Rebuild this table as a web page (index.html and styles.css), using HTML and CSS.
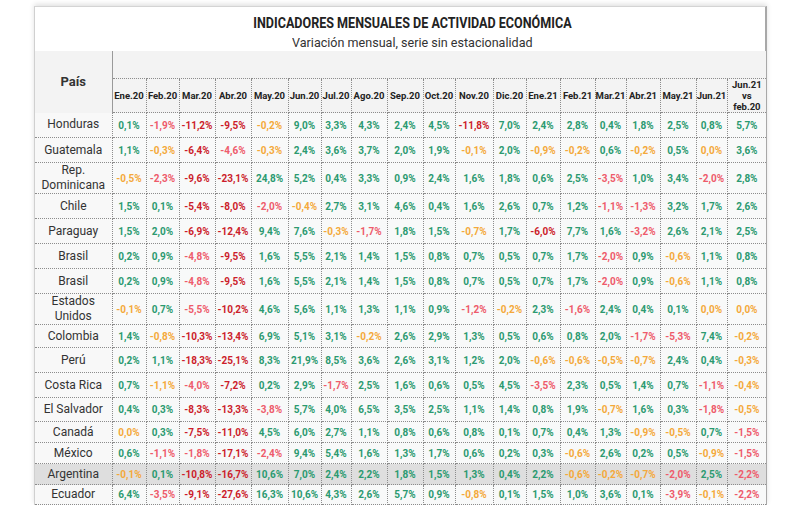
FILE: index.html
```html
<!DOCTYPE html>
<html lang="es">
<head>
<meta charset="utf-8">
<title>Indicadores mensuales de actividad económica</title>
<link rel="stylesheet" href="styles.css">
</head>
<body>
<div class="card">
  <div class="heading">
    <div class="title"><span>INDICADORES MENSUALES DE ACTIVIDAD ECONÓMICA</span></div>
    <div class="subtitle"><span>Variación mensual, serie sin estacionalidad</span></div>
  </div>
  <table class="grid">
    <colgroup>
      <col class="c-pais">
      <col style="width:34px"><col style="width:33px"><col style="width:36px"><col style="width:36px"><col style="width:37px"><col style="width:33px"><col style="width:30px"><col style="width:36px"><col style="width:36px"><col style="width:32px"><col style="width:38px"><col style="width:33px"><col style="width:34px"><col style="width:35px"><col style="width:31px"><col style="width:34px"><col style="width:36px"><col style="width:31px"><col style="width:39px">
    </colgroup>
    <thead>
      <tr class="h-top">
        <th class="pais" rowspan="2">País</th>
        <th class="blank" colspan="19"></th>
      </tr>
      <tr class="h-months">
        <th>Ene.20</th><th>Feb.20</th><th>Mar.20</th><th>Abr.20</th><th>May.20</th><th>Jun.20</th><th>Jul.20</th><th>Ago.20</th><th>Sep.20</th><th>Oct.20</th><th>Nov.20</th><th>Dic.20</th><th>Ene.21</th><th>Feb.21</th><th>Mar.21</th><th>Abr.21</th><th>May.21</th><th>Jun.21</th><th class="vs">Jun.21<br>vs<br>feb.20</th>
      </tr>
    </thead>
    <tbody>
      <tr>
        <th>Honduras</th>
        <td class="g">0,1%</td><td class="p">-1,9%</td><td class="r">-11,2%</td><td class="r">-9,5%</td><td class="o">-0,2%</td><td class="g">9,0%</td><td class="g">3,3%</td><td class="g">4,3%</td><td class="g">2,4%</td><td class="g">4,5%</td><td class="r">-11,8%</td><td class="g">7,0%</td><td class="g">2,4%</td><td class="g">2,8%</td><td class="g">0,4%</td><td class="g">1,8%</td><td class="g">2,5%</td><td class="g">0,8%</td><td class="g">5,7%</td>
      </tr>
      <tr>
        <th>Guatemala</th>
        <td class="g">1,1%</td><td class="o">-0,3%</td><td class="r">-6,4%</td><td class="p">-4,6%</td><td class="o">-0,3%</td><td class="g">2,4%</td><td class="g">3,6%</td><td class="g">3,7%</td><td class="g">2,0%</td><td class="g">1,9%</td><td class="o">-0,1%</td><td class="g">2,0%</td><td class="o">-0,9%</td><td class="o">-0,2%</td><td class="g">0,6%</td><td class="o">-0,2%</td><td class="g">0,5%</td><td class="o">0,0%</td><td class="g">3,6%</td>
      </tr>
      <tr class="tall">
        <th>Rep.<br>Dominicana</th>
        <td class="o">-0,5%</td><td class="p">-2,3%</td><td class="r">-9,6%</td><td class="r">-23,1%</td><td class="g">24,8%</td><td class="g">5,2%</td><td class="g">0,4%</td><td class="g">3,3%</td><td class="g">0,9%</td><td class="g">2,4%</td><td class="g">1,6%</td><td class="g">1,8%</td><td class="g">0,6%</td><td class="g">2,5%</td><td class="p">-3,5%</td><td class="g">1,0%</td><td class="g">3,4%</td><td class="p">-2,0%</td><td class="g">2,8%</td>
      </tr>
      <tr>
        <th>Chile</th>
        <td class="g">1,5%</td><td class="g">0,1%</td><td class="r">-5,4%</td><td class="r">-8,0%</td><td class="p">-2,0%</td><td class="o">-0,4%</td><td class="g">2,7%</td><td class="g">3,1%</td><td class="g">4,6%</td><td class="g">0,4%</td><td class="g">1,6%</td><td class="g">2,6%</td><td class="g">0,7%</td><td class="g">1,2%</td><td class="p">-1,1%</td><td class="p">-1,3%</td><td class="g">3,2%</td><td class="g">1,7%</td><td class="g">2,6%</td>
      </tr>
      <tr>
        <th>Paraguay</th>
        <td class="g">1,5%</td><td class="g">2,0%</td><td class="r">-6,9%</td><td class="r">-12,4%</td><td class="g">9,4%</td><td class="g">7,6%</td><td class="o">-0,3%</td><td class="p">-1,7%</td><td class="g">1,8%</td><td class="g">1,5%</td><td class="o">-0,7%</td><td class="g">1,7%</td><td class="r">-6,0%</td><td class="g">7,7%</td><td class="g">1,6%</td><td class="p">-3,2%</td><td class="g">2,6%</td><td class="g">2,1%</td><td class="g">2,5%</td>
      </tr>
      <tr>
        <th>Brasil</th>
        <td class="g">0,2%</td><td class="g">0,9%</td><td class="p">-4,8%</td><td class="r">-9,5%</td><td class="g">1,6%</td><td class="g">5,5%</td><td class="g">2,1%</td><td class="g">1,4%</td><td class="g">1,5%</td><td class="g">0,8%</td><td class="g">0,7%</td><td class="g">0,5%</td><td class="g">0,7%</td><td class="g">1,7%</td><td class="p">-2,0%</td><td class="g">0,9%</td><td class="o">-0,6%</td><td class="g">1,1%</td><td class="g">0,8%</td>
      </tr>
      <tr>
        <th>Brasil</th>
        <td class="g">0,2%</td><td class="g">0,9%</td><td class="p">-4,8%</td><td class="r">-9,5%</td><td class="g">1,6%</td><td class="g">5,5%</td><td class="g">2,1%</td><td class="g">1,4%</td><td class="g">1,5%</td><td class="g">0,8%</td><td class="g">0,7%</td><td class="g">0,5%</td><td class="g">0,7%</td><td class="g">1,7%</td><td class="p">-2,0%</td><td class="g">0,9%</td><td class="o">-0,6%</td><td class="g">1,1%</td><td class="g">0,8%</td>
      </tr>
      <tr class="tall">
        <th>Estados<br>Unidos</th>
        <td class="o">-0,1%</td><td class="g">0,7%</td><td class="p">-5,5%</td><td class="r">-10,2%</td><td class="g">4,6%</td><td class="g">5,6%</td><td class="g">1,1%</td><td class="g">1,3%</td><td class="g">1,1%</td><td class="g">0,9%</td><td class="p">-1,2%</td><td class="o">-0,2%</td><td class="g">2,3%</td><td class="p">-1,6%</td><td class="g">2,4%</td><td class="g">0,4%</td><td class="g">0,1%</td><td class="o">0,0%</td><td class="o">0,0%</td>
      </tr>
      <tr class="r23">
        <th>Colombia</th>
        <td class="g">1,4%</td><td class="o">-0,8%</td><td class="r">-10,3%</td><td class="r">-13,4%</td><td class="g">6,9%</td><td class="g">5,1%</td><td class="g">3,1%</td><td class="o">-0,2%</td><td class="g">2,6%</td><td class="g">2,9%</td><td class="g">1,3%</td><td class="g">0,5%</td><td class="g">0,6%</td><td class="g">0,8%</td><td class="g">2,0%</td><td class="p">-1,7%</td><td class="p">-5,3%</td><td class="g">7,4%</td><td class="o">-0,2%</td>
      </tr>
      <tr>
        <th>Perú</th>
        <td class="g">0,2%</td><td class="g">1,1%</td><td class="r">-18,3%</td><td class="r">-25,1%</td><td class="g">8,3%</td><td class="g">21,9%</td><td class="g">8,5%</td><td class="g">3,6%</td><td class="g">2,6%</td><td class="g">3,1%</td><td class="g">1,2%</td><td class="g">2,0%</td><td class="o">-0,6%</td><td class="o">-0,6%</td><td class="o">-0,5%</td><td class="o">-0,7%</td><td class="g">2,4%</td><td class="g">0,4%</td><td class="o">-0,3%</td>
      </tr>
      <tr>
        <th>Costa Rica</th>
        <td class="g">0,7%</td><td class="o">-1,1%</td><td class="p">-4,0%</td><td class="r">-7,2%</td><td class="g">0,2%</td><td class="g">2,9%</td><td class="p">-1,7%</td><td class="g">2,5%</td><td class="g">1,6%</td><td class="g">0,6%</td><td class="g">0,5%</td><td class="g">4,5%</td><td class="p">-3,5%</td><td class="g">2,3%</td><td class="g">0,5%</td><td class="g">1,4%</td><td class="g">0,7%</td><td class="p">-1,1%</td><td class="o">-0,4%</td>
      </tr>
      <tr class="r24">
        <th>El Salvador</th>
        <td class="g">0,4%</td><td class="g">0,3%</td><td class="r">-8,3%</td><td class="r">-13,3%</td><td class="p">-3,8%</td><td class="g">5,7%</td><td class="g">4,0%</td><td class="g">6,5%</td><td class="g">3,5%</td><td class="g">2,5%</td><td class="g">1,1%</td><td class="g">1,4%</td><td class="g">0,8%</td><td class="g">1,9%</td><td class="o">-0,7%</td><td class="g">1,6%</td><td class="g">0,3%</td><td class="p">-1,8%</td><td class="o">-0,5%</td>
      </tr>
      <tr class="r22">
        <th>Canadá</th>
        <td class="o">0,0%</td><td class="g">0,3%</td><td class="r">-7,5%</td><td class="r">-11,0%</td><td class="g">4,5%</td><td class="g">6,0%</td><td class="g">2,7%</td><td class="g">1,1%</td><td class="g">0,8%</td><td class="g">0,6%</td><td class="g">0,8%</td><td class="g">0,1%</td><td class="g">0,7%</td><td class="g">0,4%</td><td class="g">1,3%</td><td class="o">-0,9%</td><td class="o">-0,5%</td><td class="g">0,7%</td><td class="p">-1,5%</td>
      </tr>
      <tr class="r21">
        <th>México</th>
        <td class="g">0,6%</td><td class="p">-1,1%</td><td class="p">-1,8%</td><td class="r">-17,1%</td><td class="p">-2,4%</td><td class="g">9,4%</td><td class="g">5,4%</td><td class="g">1,6%</td><td class="g">1,3%</td><td class="g">1,7%</td><td class="g">0,6%</td><td class="g">0,2%</td><td class="g">0,3%</td><td class="o">-0,6%</td><td class="g">2,6%</td><td class="g">0,2%</td><td class="g">0,5%</td><td class="o">-0,9%</td><td class="p">-1,5%</td>
      </tr>
      <tr class="r21 hl">
        <th>Argentina</th>
        <td class="o">-0,1%</td><td class="g">0,1%</td><td class="r">-10,8%</td><td class="r">-16,7%</td><td class="g">10,6%</td><td class="g">7,0%</td><td class="g">2,4%</td><td class="g">2,2%</td><td class="g">1,8%</td><td class="g">1,5%</td><td class="g">1,3%</td><td class="g">0,4%</td><td class="g">2,2%</td><td class="o">-0,6%</td><td class="o">-0,2%</td><td class="o">-0,7%</td><td class="p">-2,0%</td><td class="g">2,5%</td><td class="p">-2,2%</td>
      </tr>
      <tr class="r20">
        <th>Ecuador</th>
        <td class="g">6,4%</td><td class="p">-3,5%</td><td class="r">-9,1%</td><td class="r">-27,6%</td><td class="g">16,3%</td><td class="g">10,6%</td><td class="g">4,3%</td><td class="g">2,6%</td><td class="g">5,7%</td><td class="g">0,9%</td><td class="o">-0,8%</td><td class="g">0,1%</td><td class="g">1,5%</td><td class="g">1,0%</td><td class="g">3,6%</td><td class="g">0,1%</td><td class="p">-3,9%</td><td class="o">-0,1%</td><td class="p">-2,2%</td>
      </tr>
    </tbody>
  </table>
</div>
</body>
</html>
```

FILE: styles.css
```css
html, body {
  margin: 0;
  padding: 0;
  background: #ffffff;
}

body {
  font-family: Roboto, "Liberation Sans", Arial, sans-serif;
  color: #333333;
}

.card {
  margin: 6px 0 0 34px;
  width: 733px;
  background: #ffffff;
  border-top: 1px solid #d4d4d4;
  border-left: 1px solid #d0d0d0;
  border-right: 2px solid #a8a8a8;
  box-shadow: 0 -2px 5px rgba(0, 0, 0, 0.12);
  box-sizing: border-box;
}

.heading {
  padding: 7px 0 0 24px;
  text-align: center;
  height: 44px;
  box-sizing: border-box;
}

.title {
  line-height: 18px;
  height: 18px;
  font-size: 15.5px;
  font-weight: 700;
  color: #222222;
}

.title span,
.subtitle span {
  display: inline-block;
  white-space: nowrap;
}

.title span {
  transform: scaleX(0.81);
}

.subtitle {
  margin-top: 2px;
  line-height: 17px;
  height: 17px;
  font-size: 13.5px;
  color: #333333;
}

.subtitle span {
  transform: scaleX(0.93);
}

.grid {
  width: 731px;
  table-layout: fixed;
  border-collapse: collapse;
  font-family: Roboto, "Liberation Sans", Arial, sans-serif;
}

.c-pais {
  width: 77px;
}

.grid thead th {
  background: #f3f3f3;
  font-size: 9.5px;
  font-weight: 700;
  color: #222222;
  padding: 0;
  text-align: center;
  white-space: nowrap;
}

.grid thead th.pais {
  font-size: 13px;
  font-weight: 700;
  color: #333333;
  border-right: 1px solid #9a9a9a;
  padding-top: 0;
}

.h-top th.blank {
  height: 27px;
  border-bottom: 1px dotted #8c8c8c;
}

.h-months th {
  height: 30px;
  border-left: 1px dotted #8c8c8c;
  border-right: 1px dotted #8c8c8c;
  border-bottom: 1px dotted #8c8c8c;
  padding-top: 2px;
  box-sizing: border-box;
}

.h-months th.vs {
  line-height: 11px;
  padding-top: 0;
  border-right: none;
}

.grid tbody th {
  font-weight: 400;
  font-size: 12px;
  line-height: 15px;
  color: #333333;
  background: #f8f8f8;
  border-bottom: 1px dotted #8c8c8c;
  border-right: 1px dotted #8c8c8c;
  padding: 0;
  text-align: center;
}

.grid tbody td {
  height: 24px;
  padding: 0;
  font-size: 10px;
  font-weight: 700;
  text-align: center;
  background: #f8f9f9;
  border: 1px dotted #8c8c8c;
  white-space: nowrap;
}

.grid tbody td:last-child {
  border-right: none;
}

.grid tbody tr {
  height: 24px;
}

.grid tbody tr.tall,
.grid tbody tr.tall td {
  height: 30px;
}

.grid tbody tr.r24,
.grid tbody tr.r24 td {
  height: 23px;
}

.grid tbody tr.r23,
.grid tbody tr.r23 td {
  height: 22px;
}

.grid tbody tr.r22,
.grid tbody tr.r22 td {
  height: 20px;
}

.grid tbody tr.r21,
.grid tbody tr.r21 td {
  height: 20px;
}

.grid tbody tr.r20,
.grid tbody tr.r20 td {
  height: 19px;
}

.grid tbody tr.hl th,
.grid tbody tr.hl td {
  background: #dedede;
}

.g {
  color: #2b9a70;
}

.o {
  color: #f4a93b;
}

.p {
  color: #ee5b6b;
}

.r {
  color: #cc1d2b;
}
```
